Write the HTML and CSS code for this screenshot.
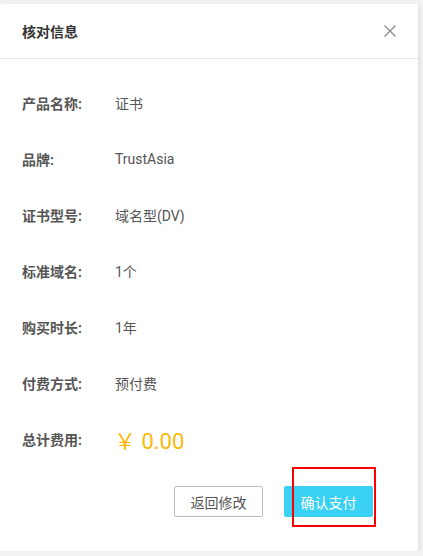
FILE: index.html
```html
<!DOCTYPE html>
<html>
<head>
<meta charset="utf-8">
<link rel="stylesheet" href="styles.css">
</head>
<body>
<div class="dialog">
  <div class="header">
    <span class="title">核对信息</span>
    <svg class="close" width="14" height="14" viewBox="0 0 14 14"><path d="M1.5 1.5L12.5 12.5M12.5 1.5L1.5 12.5" stroke="#8a8a8a" stroke-width="1.3" fill="none"/></svg>
  </div>
  <div class="body">
    <div class="row"><span class="label">产品名称:</span><span class="value">证书</span></div>
    <div class="row"><span class="label">品牌:</span><span class="value">TrustAsia</span></div>
    <div class="row"><span class="label">证书型号:</span><span class="value">域名型(DV)</span></div>
    <div class="row"><span class="label">标准域名:</span><span class="value">1个</span></div>
    <div class="row"><span class="label">购买时长:</span><span class="value">1年</span></div>
    <div class="row"><span class="label">付费方式:</span><span class="value">预付费</span></div>
    <div class="row"><span class="label">总计费用:</span><span class="value price">￥ 0.00</span></div>
  </div>
  <div class="footer">
    <button class="btn btn-default">返回修改</button>
    <button class="btn btn-primary">确认支付</button>
    <div class="highlight"></div>
  </div>
</div>
</body>
</html>
```
FILE: styles.css
```css
html, body {
  margin: 0;
  padding: 0;
  background: #f2f2f2;
}
body {
  font-family: Roboto, "Noto Sans CJK SC", sans-serif;
  padding-top: 4px;
}
.dialog {
  width: 418px;
  height: 547px;
  background: #fff;
  border-radius: 0 0 3px 0;
  box-shadow: 2px 2px 4px rgba(0,0,0,0.08);
  display: flex;
  flex-direction: column;
}
.header {
  height: 54px;
  border-bottom: 1px solid #e6e6e6;
  display: flex;
  align-items: center;
  justify-content: space-between;
  padding: 0 21px 0 22px;
}
.title {
  font-size: 14px;
  font-weight: bold;
  color: #333;
}
.close {
  display: block;
}
.body {
  padding: 16px 0 0 22px;
  display: flex;
  flex-direction: column;
}
.row {
  height: 56px;
  display: flex;
  align-items: center;
  font-size: 14px;
}
.label {
  width: 93px;
  font-weight: bold;
  color: #555;
}
.value {
  color: #555;
}
.price {
  color: #fbb90a;
  font-size: 22px;
  margin-left: -1px;
}
.footer {
  position: relative;
  display: flex;
  justify-content: flex-end;
  gap: 21px;
  padding: 19px 45px 0 0;
}
.btn {
  width: 89px;
  height: 31px;
  font-family: Roboto, "Noto Sans CJK SC", sans-serif;
  font-size: 14px;
  border-radius: 2px;
  padding: 0;
  cursor: pointer;
}
.btn-default {
  background: #fff;
  border: 1px solid #bdbdbd;
  color: #555;
}
.btn-primary {
  background: #3ad1f5;
  border: 1px solid #3ad1f5;
  color: #fff;
}
.highlight {
  position: absolute;
  left: 292px;
  top: 0;
  width: 80px;
  height: 56px;
  border: 2px solid #f00;
}
```
